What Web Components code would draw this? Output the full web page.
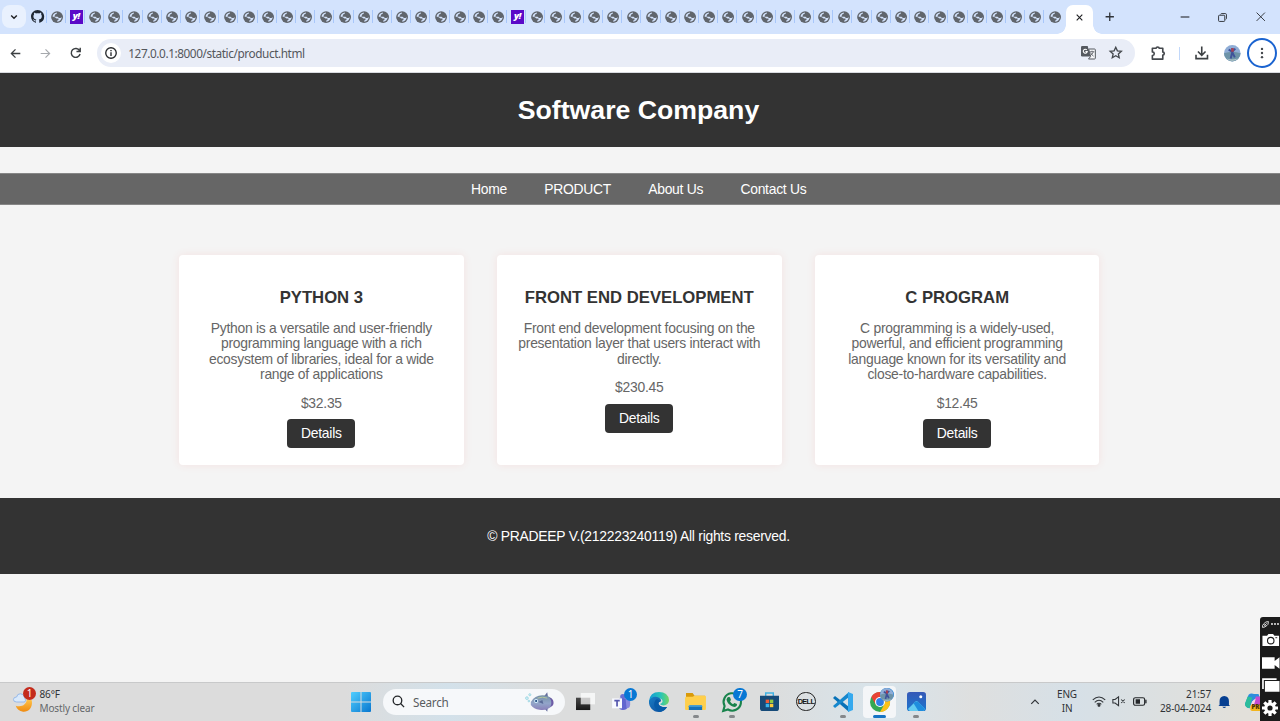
<!DOCTYPE html>
<html lang="en">
<head>
<meta charset="utf-8">
<title>Software Company</title>
<style>
html,body{margin:0;height:100%}
body{font-family:"Liberation Sans",Arial,sans-serif;font-size:13.9px;letter-spacing:-.265px;overflow:hidden}
</style>
</head>
<body>
<desktop-screen></desktop-screen>
<script>
const define = (name, html) => {
  const t = document.createElement('template');
  t.innerHTML = html;
  customElements.define(name, class extends HTMLElement {
    constructor(){ super(); this.attachShadow({mode:'open'}).append(t.content.cloneNode(true)); }
  });
};

const ICONS = {
  github:'<svg viewBox="0 0 16 16"><path fill="#1f2733" d="M8 0C3.58 0 0 3.58 0 8c0 3.54 2.29 6.53 5.47 7.59.4.07.55-.17.55-.38 0-.19-.01-.82-.01-1.49-2.01.37-2.53-.49-2.69-.94-.09-.23-.48-.94-.82-1.13-.28-.15-.68-.52-.01-.53.63-.01 1.08.58 1.23.82.72 1.21 1.87.87 2.33.66.07-.52.28-.87.51-1.07-1.78-.2-3.64-.89-3.64-3.95 0-.87.31-1.59.82-2.15-.08-.2-.36-1.02.08-2.12 0 0 .67-.21 2.2.82.64-.18 1.32-.27 2-.27s1.36.09 2 .27c1.53-1.04 2.2-.82 2.2-.82.44 1.1.16 1.92.08 2.12.51.56.82 1.27.82 2.15 0 3.07-1.87 3.75-3.65 3.95.29.25.54.73.54 1.48 0 1.07-.01 1.93-.01 2.2 0 .21.15.46.55.38A8.01 8.01 0 0 0 16 8c0-4.42-3.58-8-8-8z"/></svg>',
  globe:'<svg viewBox="0 0 16 16"><circle cx="8" cy="8" r="7.800" fill="#60656c"/><path fill="#d3e3fd" d="M7.800 1.900C8 3.500 7 3.700 5.900 4.200 5 4.600 5.700 5.800 4.600 6.200L4.500 7.400H8.500Q10 7.600 10 9.300L12.600 9.200 14 8C14 11.500 11.500 14 8.200 14.100V12.400L9.800 11.800V10H7.200L5 8.200 2 7.300C2.300 4.300 4.800 2.100 7.800 1.900z"/></svg>',
  chev:'<svg viewBox="0 0 16 16" fill="none" stroke="#202124" stroke-width="2.300"><path d="M3.500 5.500 8 10l4.500-4.500"/></svg>',
  close:'<svg viewBox="0 0 16 16" fill="none" stroke="#202124" stroke-width="2"><path d="m3 3 10 10M13 3 3 13"/></svg>',
  wclose:'<svg viewBox="0 0 16 16" fill="none" stroke="#30343a" stroke-width="1.600"><path d="m1 1 14 14M15 1 1 15"/></svg>',
  plus:'<svg viewBox="0 0 16 16" fill="none" stroke="#30343a" stroke-width="2.200"><path d="M8 1v14M1 8h14"/></svg>',
  min:'<svg viewBox="0 0 16 16" fill="none" stroke="#202124" stroke-width="1.700"><path d="M1 8h14"/></svg>',
  restore:'<svg viewBox="0 0 16 16" fill="none" stroke="#30343a" stroke-width="1.700"><rect x="1" y="4" width="11" height="11" rx="1.500"/><path d="M4.500 2.500Q5 1 6.500 1H13q2 0 2 2v6.500q0 1.500-1.500 2"/></svg>',
  back:'<svg viewBox="0 0 16 16" fill="none" stroke="#3c4043" stroke-width="1.900"><path d="M15 8H2M8 2 2 8l6 6"/></svg>',
  fwd:'<svg viewBox="0 0 16 16" fill="none" stroke="#a6a9ad" stroke-width="1.700"><path d="M1 8h13M8 2l6 6-6 6"/></svg>',
  reload:'<svg viewBox="0 0 16 16" fill="none" stroke="#3c4043" stroke-width="2"><path d="M13.300 5A6.200 6.200 0 1 0 14 9.700M14.200 1v5.300H9"/></svg>',
  info:'<svg viewBox="0 0 16 16" fill="none" stroke="#27292c" stroke-width="1.800"><circle cx="8" cy="8" r="7"/><path d="M8 7v5M8 4v1.700"/></svg>',
  translate:'<svg viewBox="0 0 18 16"><path fill="#55595f" d="M1.500 0H8l3.500 12.500H1.500Q0 12.500 0 11V1.500Q0 0 1.500 0z"/><path d="M7 4.600a2.400 2.400 0 1 0 .5 2H5.300" fill="none" stroke="#fff" stroke-width="1.300"/><path fill="#f7f8fb" stroke="#55595f" stroke-width="1.200" d="M9.200 3.500h7q1 0 1 1v10q0 1-1 1H9l2.500-3z"/><path d="M10.500 6.800h5.500M13.200 5.500v1.300m1.500 0c-.5 2-2 3.500-3.300 4.500m.1-3.500c.7 2 2 3.200 3.600 4.300" fill="none" stroke="#55595f"/></svg>',
  star:'<svg viewBox="0 0 16 16" fill="none" stroke="#44484d" stroke-width="1.600"><path d="m8 1.500 1.950 4.250 4.650.5-3.500 3.100 1 4.600L8 11.600l-4.100 2.350 1-4.600-3.500-3.100 4.650-.5z"/></svg>',
  puzzle:'<svg viewBox="0 0 16 16" fill="none" stroke="#44484d" stroke-width="1.800" stroke-linejoin="round"><path d="M1.500 2.500h4.200c0-1.900 3.300-1.900 3.300 0h4v4.200c2.200 0 2.200 3.300 0 3.300v4.500H1.500v-4c2.800-.3 2.800-3.700 0-4z"/></svg>',
  download:'<svg viewBox="0 0 16 16" fill="none" stroke="#3c4043" stroke-width="1.900"><path d="M8 .5v10M3.500 6.500 8 11l4.500-4.500M1.200 10.500V15h13.600v-4.500"/></svg>',
  avatar:'<svg viewBox="0 0 16 16"><circle cx="8" cy="8" r="8" fill="#8fadd6"/><path d="M0 8q8-3 16 0a8 8 0 0 1-16 0z" fill="#6d93a8"/><path d="M2.500 13q5 2 11 0A8 8 0 0 1 2.500 13z" fill="#b5c9c9"/><path d="M8 3v4M4.500 4.500 8 6.500l3-3M8 7l-1.500 6m1.500-6 2.500 5" stroke="#3f539a" stroke-width="1.900" fill="none"/><path d="M7 3h2.500v3.500H7z" fill="#a73e52"/></svg>',
  dots:'<svg viewBox="0 0 16 16" fill="#44484d"><circle cx="8" cy="2.500" r="1.600"/><circle cx="8" cy="8" r="1.600"/><circle cx="8" cy="13.500" r="1.600"/></svg>',
  weather:'<svg viewBox="0 0 24 24"><defs><linearGradient id="m" x2="0" y2="1"><stop stop-color="#ffc44a"/><stop offset="1" stop-color="#ef8b11"/></linearGradient></defs><path d="M20.500 10C22 19 16 23 11 22.500 7 22 4 19.500 3 16c6 2 12-1 12-7z" fill="url(#m)"/><path d="M4 12q-3.500 0-3.500-2.700T4 6.500Q4.500 3 8 3t4.500 3.700Q15 12 12 12z" fill="#d9e9fb" stroke="#91b5e7"/></svg>',
  start:'<svg viewBox="0 0 20 20"><defs><linearGradient id="s" x2="1" y2="1"><stop stop-color="#51ceff"/><stop offset="1" stop-color="#0877cf"/></linearGradient></defs><path fill="url(#s)" d="M1 0h8.500v9.500H0V1q0-1 1-1zm9.500 0H19q1 0 1 1v8.500h-9.500zM0 10.500h9.500V20H1q-1 0-1-1zm10.500 0H20V19q0 1-1 1h-8.500z"/></svg>',
  search:'<svg viewBox="0 0 16 16" fill="none" stroke="#25282b" stroke-width="1.700"><circle cx="7" cy="7" r="5.500"/><path d="m11 11 4.500 4.500"/></svg>',
  fish:'<svg viewBox="0 0 30 20"><defs><linearGradient id="f" x2="0" y2="1"><stop stop-color="#758fa6"/><stop offset=".55" stop-color="#92a5c9"/><stop offset="1" stop-color="#8a80ba"/></linearGradient></defs><path d="m19 5 4-5 1 6zm-1 9 5 6 1-7z" fill="#646c9b"/><path d="M6 10Q10 3 18 3q6 0 9 3 3 5 0 9-4 4-12 3-6-1-9-5z" fill="url(#f)"/><path d="M25 5q4 5 1 10 4-1 3.500-5T25 5z" fill="#6d5ba6"/><path d="m14 10 4-2 1 4z" fill="#5b6c99"/><path d="M13 6q5-2 10 0" stroke="#b4c99a" fill="none"/><circle cx="11.500" cy="9" r="2" fill="#d7f2ff"/><circle cx="11.500" cy="9" r="1.100" fill="#17437b"/><g fill="#d6f6fb" stroke="#87c9d8" stroke-width=".7"><circle cx="2" cy="6" r="1.400"/><circle cx="5" cy="2.500" r="1.100"/><circle cx="4" cy="9" r=".9"/></g></svg>',
  taskview:'<svg viewBox="0 0 20 20"><defs><linearGradient id="t" x2="0" y2="1"><stop stop-color="#484848"/><stop offset="1" stop-color="#171717"/></linearGradient></defs><path fill="url(#t)" d="M0 6h15v13H0z"/><path fill="#fff" opacity=".72" d="M5 1h15v12H5z"/></svg>',
  teams:'<svg viewBox="0 0 22 20"><circle cx="12" cy="4" r="3" fill="#6970d5"/><path d="M8 6h10v8q-1 5-6 5-4 0-5-4z" fill="#6165cf"/><path d="M15 6h5v7q0 4-4 4z" fill="#8787df"/><path d="M0 6h11v11H0z" fill="#f8faff"/><path d="M2.500 8.500h6M5.500 8.500V15" stroke="#5558ae" stroke-width="1.900"/></svg>',
  edge:'<svg viewBox="0 0 20 20"><defs><linearGradient id="e" x2="1"><stop stop-color="#119bd7"/><stop offset=".6" stop-color="#29c5b6"/><stop offset="1" stop-color="#74d663"/></linearGradient><linearGradient id="e2" x2="1" y2="1"><stop stop-color="#187dc4"/><stop offset="1" stop-color="#0d4a9b"/></linearGradient></defs><path fill="url(#e)" d="M0 9Q1 0 10 0q9 0 10 8c0 5-6 7-9 4 5-2 2-6-2-6-5 0-8 4-8 6z"/><path fill="url(#e2)" d="M0 9q3-5 8-4c4 1 5 4 3 5-4 0-2 6 7 5-2 3-5 5-8 5C4 20-.5 15 0 9z"/><path fill="#075ba8" d="M8 7c-5 3-3 11 3 13 4-1 6-3 7-5-8 1-10-4-7-6z"/></svg>',
  folder:'<svg viewBox="0 0 22 20"><path fill="#d99a0a" d="M1 1h7l2 3h11v8H1z"/><path fill="#ffcf4b" d="M1 5h7l2-1h11q1 0 1 1v12q0 2-1 2H1q-1 0-1-1V6z"/><path fill="#1671b8" d="M5 14h12q1 0 1 1v4H4v-4z"/><path fill="#4ba8df" d="M4 14h14v1.500H4z"/></svg>',
  whats:'<svg viewBox="0 0 20 20"><path d="m1.200 19 1.400-5A8.700 8.700 0 1 1 6 17.500z" fill="none" stroke="#19834c" stroke-width="2.100"/><path fill="#19834c" d="m6 5 2 .2 1 2.700-1 1.300q1 2 3 3l1.300-1.200 2.700 1q.5 2-2 3c-4 0-8-4-8.500-7.500Q5 5.500 6 5z"/></svg>',
  store:'<svg viewBox="0 0 20 20"><path d="M6 5V1h8v4" fill="none" stroke="#40b2e4" stroke-width="1.500"/><path fill="#164a78" d="M0 4h20v13q0 3-3 3H3q-3 0-3-3z"/><path fill="#f05c37" d="M6 8h3.600v3.600H6z"/><path fill="#94ca42" d="M10.400 8H14v3.600h-3.600z"/><path fill="#39b4ed" d="M6 12.400h3.600V16H6z"/><path fill="#ffca3a" d="M10.400 12.400H14V16h-3.600z"/></svg>',
  vscode:'<svg viewBox="0 0 20 20"><path fill="#0872b8" d="m0 6 2-2 14 11v5z"/><path fill="#1687cd" d="m0 14 2 2L16 5V0z"/><path fill="#35a9ee" d="m15 0 5 2v16l-5 2z"/></svg>',
  chrome:'<svg viewBox="0 0 20 20"><circle cx="10" cy="10" r="10" fill="#34a853"/><path fill="#e94335" d="M1.300 5A10 10 0 0 1 18.700 5H10v5l-4.300 2.500z"/><path fill="#fbc118" d="M18.700 5A10 10 0 0 1 10 20l4.300-7.500L10 5z"/><circle cx="10" cy="10" r="5" fill="#fff"/><circle cx="10" cy="10" r="3.900" fill="#3180e8"/></svg>',
  photos:'<svg viewBox="0 0 20 20"><defs><linearGradient id="p" x2="0" y2="1"><stop stop-color="#3659b7"/><stop offset="1" stop-color="#1b76ce"/></linearGradient></defs><rect width="20" height="20" rx="3" fill="url(#p)"/><path fill="#63cbf1" d="m1 18 8-8q1-1 2 0l8 8-2 2H3z"/><path fill="#1e8dde" d="m9 10 2 0 8 8-2 2h-5l-5-8z"/><circle cx="14.500" cy="5" r="1.600" fill="#fff"/></svg>',
  up:'<svg viewBox="0 0 16 16" fill="none" stroke="#303438" stroke-width="1.900"><path d="m2 11 6-6 6 6"/></svg>',
  wifi:'<svg viewBox="0 0 18 14" fill="none" stroke="#303438" stroke-width="1.400"><path d="M1 5q8-7.500 16 0M3.500 8Q9 2.800 14.500 8M6 10.800q3-3 6 0"/><circle cx="9" cy="12" r="1.200" fill="#303438"/></svg>',
  volume:'<svg viewBox="0 0 16 12" fill="none" stroke="#303438" stroke-width="1.200"><path d="M1 4h2.500L7.500 1v10l-4-3H1zM10.500 4l4 4m0-4-4 4"/></svg>',
  battery:'<svg viewBox="0 0 16 10"><rect x=".7" y=".7" width="12.600" height="8.600" rx="2" fill="none" stroke="#24272a" stroke-width="1.300"/><path fill="#24272a" d="M3 2.500h5v5H3zM14 3h1.500v4H14z"/></svg>',
  bell:'<svg viewBox="0 0 16 16"><path fill="#063f91" d="M2 12V7q0-6 6-6.500Q14 1 14 7v5l1.500 1.500H.5zM5.500 14.500h5q-2.500 3-5 0z"/></svg>',
  copilot:'<svg viewBox="0 0 20 20"><path fill="#2d8ddd" d="M4 2q2-2 6-1h5l3 8H8L5 17Q0 16 0 12z"/><path fill="#2dbd9b" d="m3 4 5 1-3 12Q0 16 0 12z"/><path fill="#c54bcf" d="M12 4h5q4 3 3 8l-4 5H8z"/><path fill="#f6d4ea" d="m9 8 3-2-2 7H7z"/><rect x="6" y="13" width="14" height="7" rx="2" fill="#f2b51d"/></svg>',
  rec:'<svg viewBox="0 0 12 12" fill="none" stroke="#fff" stroke-width="1.400"><path d="M4 4Q5 1 11 1q0 6-3 7L6 9 3.500 6.500z"/><path d="M3 5Q0 7 1 11q5 0 6-3M5 7l3-3"/></svg>',
  more:'<svg viewBox="0 0 8 4" fill="#fff"><circle cx="1" cy="2" r=".9"/><circle cx="4" cy="2" r=".9"/><circle cx="7" cy="2" r=".9"/></svg>',
  camera:'<svg viewBox="0 0 18 13"><path fill="#fff" d="M0 2h5l1.500-2h5L13 2h5v11H0z"/><circle cx="9" cy="7.200" r="3.500" fill="#fff" stroke="#1c1c1c" stroke-width="1.200"/><path d="M14 4h2" stroke="#1c1c1c"/></svg>',
  video:'<svg viewBox="0 0 18 12"><path fill="#fff" d="M0 0h13v4l5-4v12l-5-4v4H0z"/></svg>',
  windows:'<svg viewBox="0 0 18 14"><path d="M1 11V1h14" fill="none" stroke="#fff" stroke-width="1.700"/><path fill="#fff" d="M3 3h15v11H3z"/></svg>',
  gear:'<svg viewBox="0 0 16 16"><circle cx="8" cy="8" r="4.200" fill="none" stroke="#fff" stroke-width="3.200"/><path d="M8 0v3M8 13v3M0 8h3M13 8h3M2.300 2.300l2.200 2.200M11.500 11.500l2.200 2.200M13.700 2.300l-2.200 2.200M4.500 11.500l-2.200 2.200" stroke="#fff" stroke-width="3.200"/></svg>'
};

customElements.define('ui-icon', class extends HTMLElement {
  connectedCallback(){
    if (this.shadowRoot) return;
    const w = this.getAttribute('w') || 14, h = this.getAttribute('h') || w;
    this.attachShadow({mode:'open'}).innerHTML =
      `<style>:host{display:block;flex:none;width:${w}px;height:${h}px}svg{display:block;width:100%;height:100%;overflow:visible}</style>${ICONS[this.getAttribute('name')]}`;
  }
});

customElements.define('tab-strip', class extends HTMLElement {
  connectedCallback(){
    let tabs = '';
    for (let i = 0; i < 54; i++)
      tabs += `<div class="tab">${i === 2 || i === 25 ? '<span class="y">y!</span>' : `<ui-icon name="${i ? 'globe' : 'github'}" w="${i ? 12.2 : 13.2}"></ui-icon>`}</div>`;
    this.attachShadow({mode:'open'}).innerHTML = `<style>
      :host{display:flex;height:34px;background:#d3e3fd;flex:none;box-sizing:border-box;padding-left:2px}
      .menu{width:24px;height:23px;border-radius:8px;background:#e9f1fe;margin-top:5px;display:grid;place-items:center;margin-right:2.700px;flex:none}
      .tabs{display:grid;grid-template-columns:repeat(54,19.190px);height:34px;flex:none}
      .tab{display:grid;place-items:center;box-sizing:border-box;border-right:1px solid transparent;background:linear-gradient(#a8c7fa,#a8c7fa) right 0 top 10px/1.300px 13px no-repeat}
      .tab:last-child{background:none}
      .y{width:13px;height:13.500px;background:#5b09c8;color:#fff;font:italic 800 9.500px/12px "Open Sans",sans-serif;letter-spacing:-.5px;text-align:center}
      .active{width:26.500px;margin:5px 0 0 1.500px;background:#fff;border-radius:7px 7px 0 0;display:grid;place-items:center;padding-bottom:5px;box-sizing:border-box;flex:none;position:relative}
      .active::before,.active::after{content:"";position:absolute;bottom:0;width:9px;height:9px}
      .active::before{right:100%;background:radial-gradient(circle at 0 0,transparent 8.500px,#fff 9px)}
      .active::after{left:100%;background:radial-gradient(circle at 100% 0,transparent 8.500px,#fff 9px)}
      .new{width:34px;display:grid;place-items:center}
      .win{margin-left:auto;display:grid;grid-template-columns:repeat(3,38.200px);place-items:center}
    </style><div class="menu"><ui-icon name="chev" w="10"></ui-icon></div><div class="tabs">${tabs}</div>
    <div class="active"><ui-icon name="close" w="9"></ui-icon></div><div class="new"><ui-icon name="plus" w="9.5"></ui-icon></div>
    <div class="win"><ui-icon name="min" w="10"></ui-icon><ui-icon name="restore" w="9"></ui-icon><ui-icon name="wclose" w="9.5"></ui-icon></div>`;
  }
});

define('address-bar', `<style>
  :host{display:flex;align-items:center;height:39px;background:#fff;flex:none;box-sizing:border-box;border-bottom:1px solid #d9dbe0}
  .nav{display:grid;grid-template-columns:repeat(3,30.200px);place-items:center;width:90.600px}
  .url{display:flex;align-items:center;height:28px;width:1038px;margin-left:6.400px;border-radius:14px;background:#e9edf7;box-sizing:border-box;padding:0 12.500px 0 4px;font:11.800px "Noto Sans","Open Sans",sans-serif;color:#54575c}
  .info{width:20px;height:20px;border-radius:50%;background:#fff;display:grid;place-items:center;margin-right:7.300px}
  .txt{letter-spacing:-.42px;white-space:nowrap}
  .u{margin-left:auto;margin-right:13px}
  .right{flex:1;display:flex;align-items:center;height:100%}
  .ring{width:26px;height:26px;border:2px solid #1a63d0;border-radius:50%;display:grid;place-items:center;flex:none}
  .sep{width:1px;height:13px;background:#c2d8fa;margin:0 15px 0 14px}
</style>
<div class="nav"><ui-icon name="back" w="11"></ui-icon><ui-icon name="fwd" w="11"></ui-icon><ui-icon name="reload" w="11.5"></ui-icon></div>
<div class="url"><div class="info"><ui-icon name="info" w="12"></ui-icon></div><span class="txt">127.0.0.1:8000/static/product.html</span><ui-icon class="u" name="translate" w="15" h="13.5"></ui-icon><ui-icon name="star" w="13.5"></ui-icon></div>
<div class="right"><ui-icon name="puzzle" w="14.5" style="margin-left:16px"></ui-icon><div class="sep"></div><ui-icon name="download" w="13.5"></ui-icon><ui-icon name="avatar" w="16.5" style="margin:0 6.500px 0 15.500px"></ui-icon><div class="ring"><ui-icon name="dots" w="12"></ui-icon></div></div>`);

define('site-header', `<style>
  :host{display:flex;height:74px;flex:none;background:#333;color:#fff;align-items:center;justify-content:center;box-sizing:border-box;padding-right:3px;letter-spacing:0}
  h1{margin:0;font-size:26.670px;line-height:31px}
</style><h1><slot></slot></h1>`);

define('site-nav', `<style>
  :host{display:flex;height:32.500px;flex:none;margin-top:25.500px;background:#666;align-items:center;justify-content:center;gap:37.200px;box-sizing:border-box;padding-right:2.500px;border:solid #868686;border-width:1px 0}
  ::slotted(a){color:#fff;text-decoration:none}
</style><slot></slot>`);

define('product-card', `<style>
  :host{display:block;box-sizing:border-box;width:284.500px;height:210px;padding:33.300px 16.500px 0;background:#fff;border-radius:4px;box-shadow:0 0 8px rgba(255,80,70,.1);text-align:center;color:#666;line-height:15.450px}
  h2{margin:0 -5px;color:#333;font-size:16.700px;line-height:20px;letter-spacing:0}
  p{margin:13px 0}
  .price{margin-bottom:8.400px}
  .btn{display:inline-block;background:#333;color:#fff;border-radius:4px;padding:6.600px 13.700px;line-height:15.500px}
</style><h2><slot name="title"></slot></h2><p><slot></slot></p><p class="price"><slot name="price"></slot></p><span class="btn">Details</span>`);

define('site-footer', `<style>
  :host{display:flex;height:75.500px;flex:none;margin-top:33.500px;background:#333;color:#fff;align-items:center;justify-content:center;box-sizing:border-box;padding-right:3px}
</style><slot></slot>`);

define('task-app', `<style>
  :host{display:grid;place-items:center;width:36.800px;height:38px;padding-bottom:1px;box-sizing:border-box;position:relative;flex:none}
  :host([running])::after{content:"";position:absolute;bottom:3px;left:50%;width:6px;height:3px;margin-left:-3px;border-radius:2px;background:#85888b}
  :host([active])::before{content:"";position:absolute;left:2px;top:3px;width:33px;height:32px;border-radius:4px;background:#f4f6f8}
  :host([active])::after{content:"";position:absolute;bottom:3px;left:50%;width:13px;height:3px;margin-left:-6.500px;border-radius:2px;background:#1674c5}
  ::slotted(*){position:relative}
  ::slotted([slot=badge]){position:absolute!important;top:4.500px;right:4px;box-sizing:border-box;width:13.500px;height:13.500px;border-radius:50%;background:#0878d4;color:#fff;font:10px/13.500px "Noto Sans",sans-serif;text-align:center}
</style><slot></slot><slot name="badge"></slot>`);

define('task-bar', `<style>
  :host{display:flex;height:39px;box-sizing:border-box;margin-top:auto;flex:none;border-top:1px solid #c8c9ca;background:linear-gradient(90deg,#dcdcdc 0,#dcdcdc 27%,#d3e1ea 35%,#dcdddd 43%,#dcdddd 60%,#d8e4eb 69%,#dedfdf 76%,#d6e0e7 84%,#e2e0da 97%);font-family:"Noto Sans","Open Sans",sans-serif;font-size:10px;color:#303236;letter-spacing:0}
  .weather{width:342.600px;display:flex;align-items:center;box-sizing:border-box;padding:0 0 1px 13px;position:relative}
  .weather ui-icon{margin-right:4.500px}
  .lines{line-height:13.200px;white-space:nowrap;letter-spacing:-.14px}
  .muted{color:#64676a}
  .red{position:absolute;left:23px;top:4px;width:13px;height:13px;border-radius:50%;background:#c42b1c;color:#fff;line-height:13px;text-align:center}
  .search{width:182px;height:26px;margin:5.500px 1.800px 0 3.600px;border-radius:13px;background:#f6f8fa;display:flex;align-items:center;padding:0 11px 0 9px;box-sizing:border-box;font-size:11.700px;color:#585c60}
  .search span{margin:0 auto 0 8.500px;letter-spacing:-.25px}
  .dell{width:17.500px;height:17.500px;border:1.500px solid #202020;border-radius:50%;font:900 7.300px/17.500px "Liberation Sans",sans-serif;color:#151515;text-align:center;letter-spacing:-.6px}
  .tray{flex:1;display:grid;grid-template-columns:26px 38px 26px 14px 27px 59px 25px 33px;justify-content:end;align-items:center;justify-items:center;padding:0 10px 1px 0}
  .c{text-align:center}.r{text-align:right;justify-self:end;margin-right:1px}.tray .lines{color:#303236;letter-spacing:-.12px}
  .pre{position:relative}.pre span{position:absolute;left:7px;top:11.500px;font:800 6px/7px "Open Sans",sans-serif;color:#4b3305}
</style>
<div class="weather"><ui-icon name="weather" w="22"></ui-icon><div class="red">1</div><div class="lines">86°F<br><span class="muted">Mostly clear</span></div></div>
<task-app><ui-icon name="start" w="20"></ui-icon></task-app>
<div class="search"><ui-icon name="search" w="12.5"></ui-icon><span>Search</span><ui-icon name="fish" w="29" h="20"></ui-icon></div>
<task-app><ui-icon name="taskview" w="19"></ui-icon></task-app>
<task-app><ui-icon name="teams" w="20" h="18"></ui-icon><span slot="badge" style="right:3px">1</span></task-app>
<task-app><ui-icon name="edge" w="20"></ui-icon></task-app>
<task-app running><ui-icon name="folder" w="21" h="19"></ui-icon></task-app>
<task-app running><ui-icon name="whats" w="20"></ui-icon><span slot="badge">7</span></task-app>
<task-app><ui-icon name="store" w="19"></ui-icon></task-app>
<task-app><div class="dell">DELL</div></task-app>
<task-app running><ui-icon name="vscode" w="20"></ui-icon></task-app>
<task-app active><ui-icon name="chrome" w="20"></ui-icon><ui-icon slot="badge" name="avatar" w="13"></ui-icon></task-app>
<task-app running><ui-icon name="photos" w="19"></ui-icon></task-app>
<div class="tray"><ui-icon name="up" w="10"></ui-icon><div class="lines c">ENG<br>IN</div><ui-icon name="wifi" w="14" h="11"></ui-icon><ui-icon name="volume" w="14" h="10.5"></ui-icon><ui-icon name="battery" w="14" h="9"></ui-icon><div class="lines r">21:57<br>28-04-2024</div><ui-icon name="bell" w="12.5" h="13.5"></ui-icon><div class="pre"><ui-icon name="copilot" w="18"></ui-icon><span>PRE</span></div></div>`);

define('capture-dock', `<style>
  :host{position:absolute;right:0;top:617px;width:20.500px;height:104px;background:#1b1b1b;border-radius:3px 0 0 0;overflow:hidden;box-sizing:border-box;padding:3px 0 0 2.500px;display:grid;grid-template-rows:8px 24px 22px 22px 24px;align-items:center}
  .top{display:flex;align-items:center;gap:2px}
</style><div class="top"><ui-icon name="rec" w="7"></ui-icon><ui-icon name="more" w="8" h="4"></ui-icon></div><ui-icon name="camera" w="17.5" h="12"></ui-icon><ui-icon name="video" w="17.5" h="12"></ui-icon><ui-icon name="windows" w="17.5" h="14"></ui-icon><ui-icon name="gear" w="16"></ui-icon>`);

define('desktop-screen', `<style>
  :host{display:flex;flex-direction:column;height:721px;background:#f4f4f4;position:relative;overflow:hidden}
  main{display:flex;justify-content:center;gap:33.400px;margin-top:49.500px;padding-right:1.500px;flex:none}
</style>
<tab-strip></tab-strip><address-bar></address-bar>
<site-header>Software Company</site-header>
<site-nav><a>Home</a><a>PRODUCT</a><a>About Us</a><a>Contact Us</a></site-nav>
<main>
<product-card><span slot="title">PYTHON 3</span>Python is a versatile and user-friendly programming language with a rich ecosystem of libraries, ideal for a wide range of applications<span slot="price">$32.35</span></product-card>
<product-card><span slot="title">FRONT END DEVELOPMENT</span>Front end development focusing on the presentation layer that users interact with directly.<span slot="price">$230.45</span></product-card>
<product-card><span slot="title">C PROGRAM</span>C programming is a widely-used, powerful, and efficient programming language known for its versatility and close-to-hardware capabilities.<span slot="price">$12.45</span></product-card>
</main>
<site-footer>© PRADEEP V.(212223240119) All rights reserved.</site-footer>
<task-bar></task-bar><capture-dock></capture-dock>`);
</script>
</body>
</html>
